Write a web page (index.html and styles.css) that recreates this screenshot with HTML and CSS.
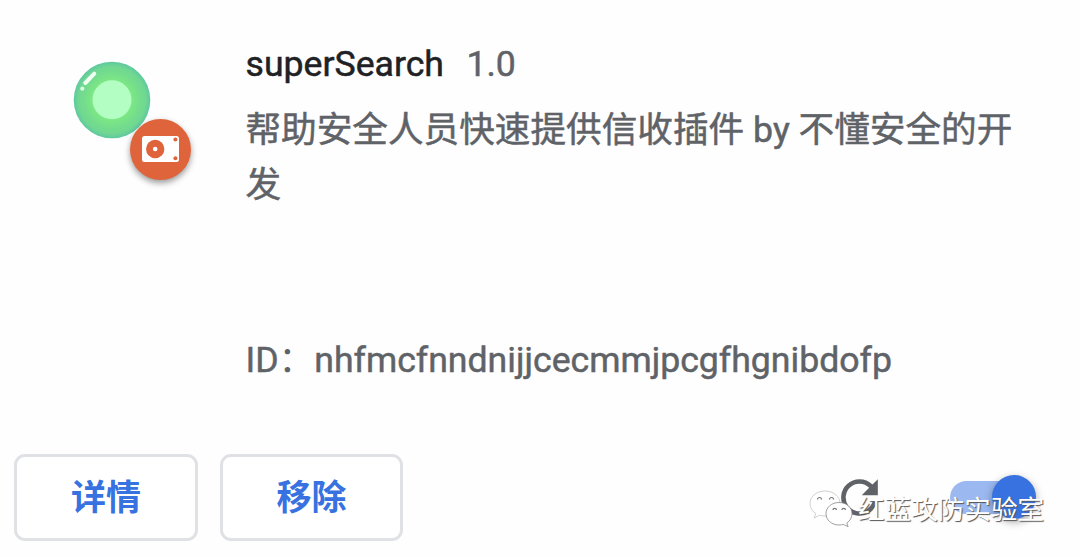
FILE: index.html
```html
<!DOCTYPE html>
<html lang="zh-CN">
<head>
    <meta charset="UTF-8">
    <meta name="viewport" content="width=device-width, initial-scale=1.0">
    <title>superSearch</title>
    <link rel="stylesheet" href="styles.css">
</head>
<body>
    <div class="card">
        <div class="main">
            <div class="icon">
                <svg class="logo" viewBox="0 0 78 78">
                    <defs>
                        <radialGradient id="ball">
                            <stop offset="0.5" stop-color="#7de884"/>
                            <stop offset="0.72" stop-color="#74dd8c"/>
                            <stop offset="0.88" stop-color="#70d792"/>
                            <stop offset="1" stop-color="#5dc8a0"/>
                        </radialGradient>
                    </defs>
                    <circle cx="39" cy="39" r="38.3" fill="url(#ball)"/>
                    <circle cx="39" cy="38.7" r="19.5" fill="#b3ffc3"/>
                    <path d="M12.3 22L21.3 12.7" stroke="#effff2" stroke-width="4" stroke-linecap="round"/>
                    <circle cx="9.3" cy="27.7" r="2.1" fill="#d9fbe4"/>
                </svg>
                <div class="badge">
                    <svg viewBox="0 0 37 26">
                        <rect width="37" height="26" rx="2.5" fill="#fff"/>
                        <circle cx="13.2" cy="13" r="9.2"/>
                        <circle cx="13.2" cy="13" r="2.3" fill="#fff"/>
                        <circle cx="33.4" cy="3.6" r="2"/>
                        <circle cx="33.4" cy="22.2" r="2"/>
                    </svg>
                </div>
            </div>
            <div class="content">
                <div class="title"><span class="name">superSearch</span><span class="version">1.0</span></div>
                <div class="desc">帮助安全人员快速提供信收插件 by 不懂安全的开发</div>
                <div class="ext-id">ID<span class="colon">：</span><span>nhfmcfnndnijjcecmmjpcgfhgnibdofp</span></div>
            </div>
        </div>
        <div class="footer">
            <button class="btn">详情</button>
            <button class="btn">移除</button>
            <svg class="reload" viewBox="0 0 24 24">
                <path d="M17.65 6.35A7.96 7.96 0 0 0 12 4a8 8 0 1 0 7.73 10h-2.08A6 6 0 1 1 12 6c1.66 0 3.14.69 4.22 1.78L13 11h7V4z"/>
            </svg>
            <div class="toggle"><div class="knob"></div></div>
        </div>
        <div class="watermark">
            <svg viewBox="0 0 44 38">
                <path d="M16 1C7.500 1 1 6.500 1 13.500c0 4.200 2.200 7.700 5.800 10L5.200 28l5.300-2.700c1.800.5 3.600.7 5.500.7 8.500 0 15-5.500 15-12.500S24.500 1 16 1z"/>
                <path class="front" d="M30 12.500c-7.500 0-13 5-13 11.200S22.500 35 30 35c1.600 0 3.200-.2 4.500-.6l4.600 2.300-1.300-3.800c3.200-2 5.200-5.300 5.200-9.200 0-6.200-5.500-11.200-13-11.200z"/>
                <path class="eye" d="M8.500 9.500a2 2 0 0 1 4 0M20.500 9.500a2 2 0 0 1 4 0M24 20a1.700 1.700 0 0 1 3.400 0M33 20a1.700 1.700 0 0 1 3.400 0"/>
            </svg>
            <span>红蓝攻防实验室</span>
        </div>
    </div>
</body>
</html>
```

FILE: styles.css
```css
* {
    box-sizing: border-box;
}
body {
    margin: 0;
    background-color: #fefefe;
    color: #5f6368;
    font-family: Roboto, "Noto Sans CJK SC", sans-serif;
    font-size: 35.64px;
    line-height: 55px;
    -webkit-text-stroke: 0.5px;
}
.card {
    position: relative;
    height: 557px;
    overflow: hidden;
}
.main {
    display: flex;
    height: 454px;
    padding: 37px 55px 0 73px;
}
.icon {
    position: relative;
    width: 78px;
    margin: 24px 94.5px 0 0;
    flex-shrink: 0;
}
.logo {
    display: block;
    width: 78px;
    height: 78px;
}
/* 右下角来源标记 */
.badge {
    position: absolute;
    left: 56.5px;
    top: 57.5px;
    width: 61px;
    height: 61px;
    display: flex;
    align-items: center;
    justify-content: center;
    border-radius: 50%;
    background-color: #df643b;
    box-shadow: 0 3px 6px rgba(0, 0, 0, 0.4);
}
.badge svg {
    width: 37px;
    height: 26px;
    fill: #df643b;
}
.content {
    flex: 1;
    display: flex;
    flex-direction: column;
}
.name {
    color: #202124;
    margin-right: 22.5px;
}
.desc {
    margin-top: 11px;
}
.ext-id {
    margin-top: 120px;
    white-space: nowrap;
}
.colon {
    -webkit-text-stroke: 0;
}
.footer {
    display: flex;
    align-items: center;
    padding: 0 53px 0 14px;
}
.btn {
    width: 184px;
    height: 87px;
    margin-right: 22px;
    padding: 0 0 6px;
    border: 3px solid #dfe1e5;
    border-radius: 11px;
    background-color: #fff;
    color: #3872e0;
    font-family: inherit;
    font-size: 35px;
    font-weight: 700;
    -webkit-text-stroke: 0;
}
.btn + .btn {
    width: 183px;
}
.reload {
    width: 55px;
    height: 55px;
    margin-left: auto;
    fill: #5f6368;
}
.toggle {
    width: 77px;
    height: 33px;
    margin-left: 63px;
    border-radius: 17px;
    background-color: #9bb8f0;
}
.knob {
    width: 44px;
    height: 44px;
    margin: -6px 0 0 42px;
    border-radius: 50%;
    background-color: #3872e0;
    box-shadow: 0 3px 8px rgba(0, 0, 0, 0.35);
}
/* 公众号水印 */
.watermark {
    position: absolute;
    left: 809px;
    top: 490px;
    display: flex;
    align-items: center;
    color: #fff;
    font-size: 26.6px;
    font-weight: 400;
    line-height: 40px;
    text-shadow: 1px 1px 1px #555;
    -webkit-text-stroke: 0;
}
.watermark svg {
    width: 44px;
    height: 38px;
    margin: -3px 5px 0 0;
    fill: #fff;
    stroke: #c4c4c4;
    stroke-width: 0.8;
}
.watermark .front {
    stroke: #888;
}
.watermark .eye {
    fill: none;
    stroke: #777;
    stroke-width: 1.2;
}
```
